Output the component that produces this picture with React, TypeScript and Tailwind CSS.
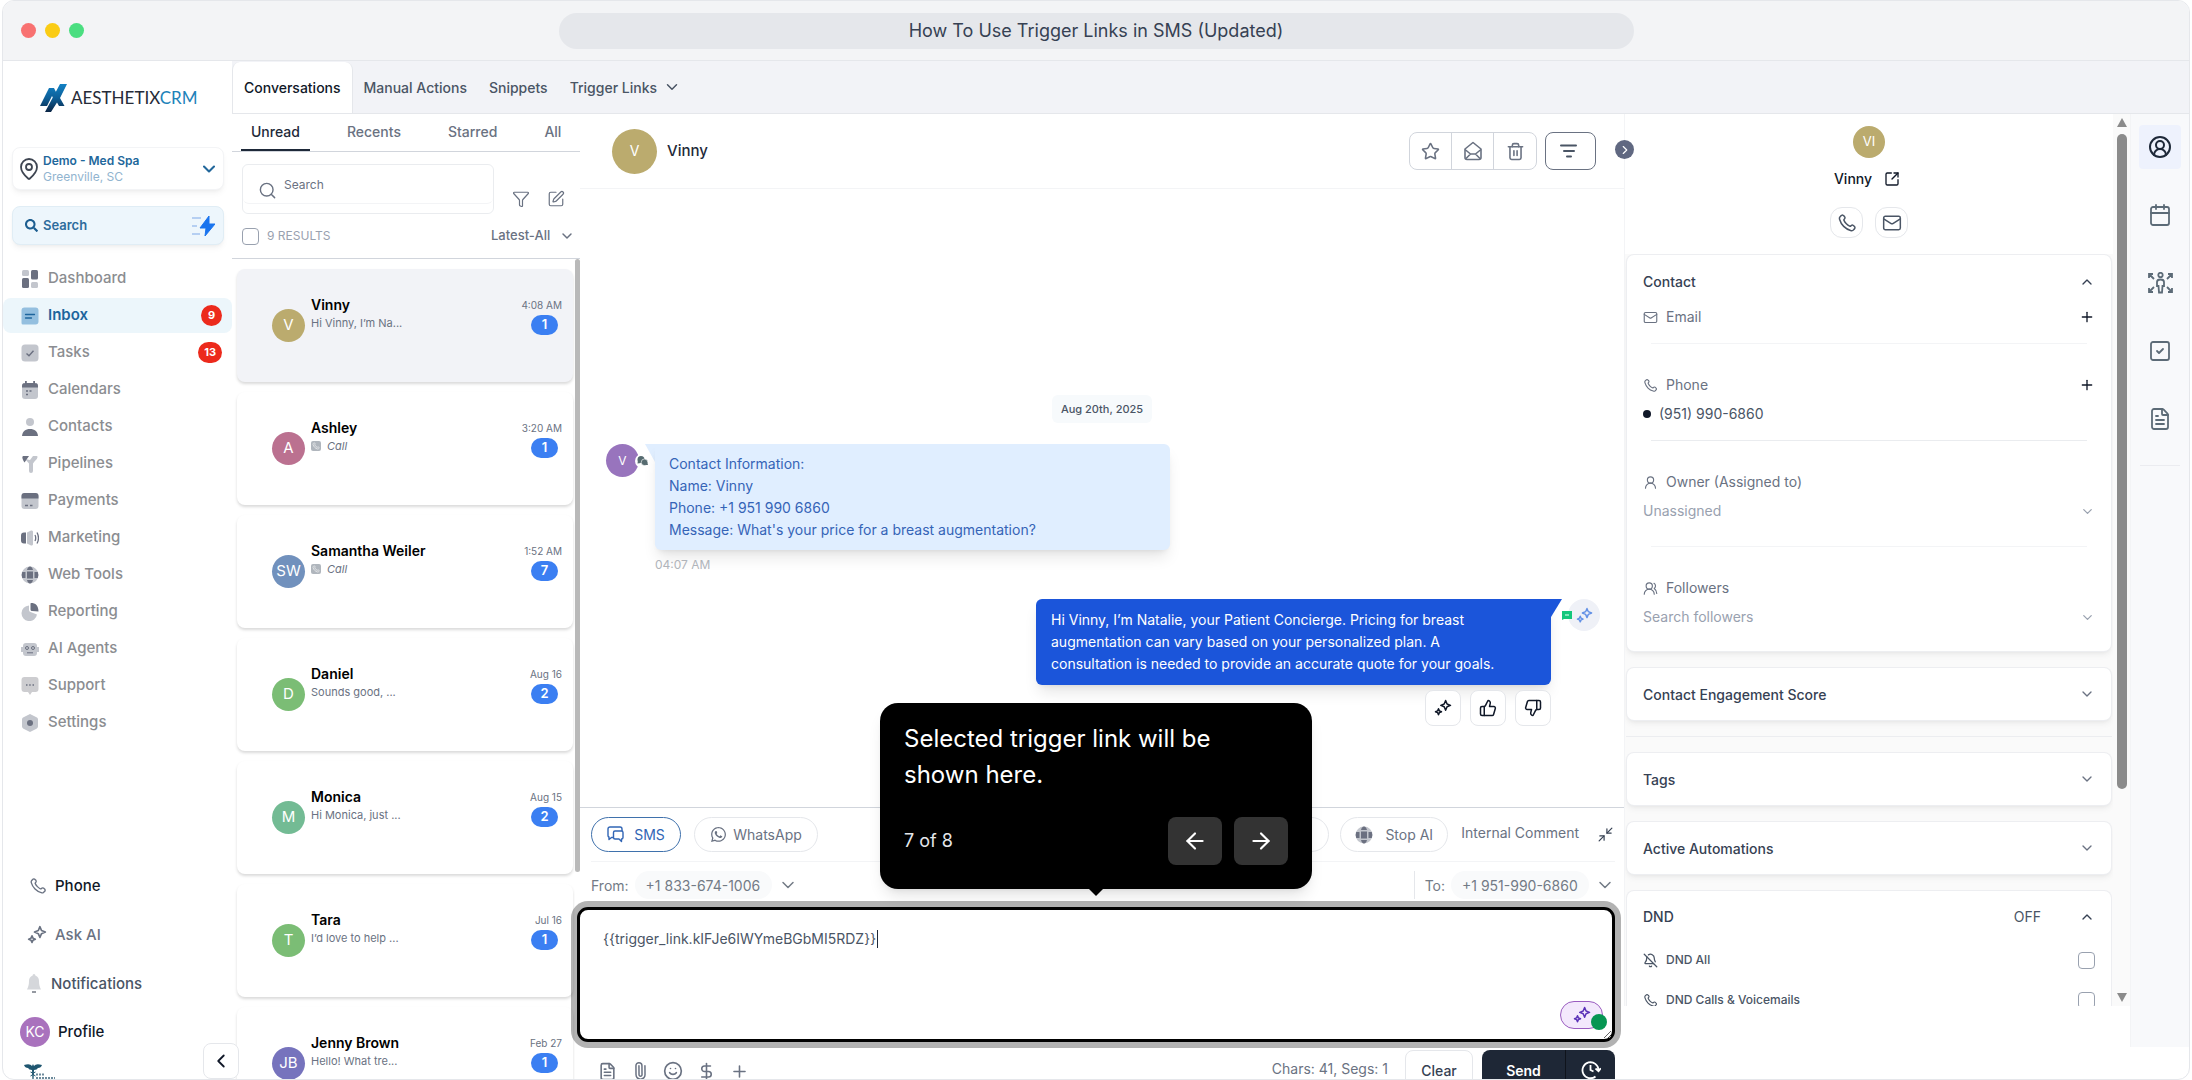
import type { ReactNode } from "react";
import {
  ArrowLeft,
  ArrowRight,
  BellOff,
  Calendar,
  ChevronDown,
  ChevronLeft,
  ChevronRight,
  ChevronUp,
  CircleUserRound,
  DollarSign,
  FileText,
  Filter,
  Mail,
  MapPin,
  Minimize2,
  Paperclip,
  Plus,
  Search,
  Smile,
  SquareArrowOutUpRight,
  SquareCheck,
  SquarePen,
  Star,
  ThumbsDown,
  ThumbsUp,
  Trash2,
  UserRound,
  UsersRound,
} from "lucide-react";
import { FaSearch, FaWhatsapp } from "react-icons/fa";

const DARK = "#6b7080";
const LIGHT = "#c3c6cd";

function PhoneIcon({ size = 18, className = "" }: { size?: number; className?: string }) {
  return (
    <svg width={size} height={size} viewBox="0 0 24 24" fill="none" stroke="currentColor" strokeWidth="1.8" className={className}>
      <path d="M8.38 8.85C9.08 10.3 10.03 11.66 11.23 12.86C12.43 14.06 13.79 15.01 15.24 15.71C15.36 15.77 15.42 15.8 15.5 15.82C15.78 15.9 16.13 15.85 16.36 15.68C16.43 15.63 16.49 15.57 16.6 15.46C16.95 15.11 17.13 14.93 17.3 14.82C17.97 14.39 18.82 14.39 19.48 14.82C19.66 14.93 19.83 15.11 20.18 15.46L20.38 15.65C20.91 16.18 21.18 16.45 21.32 16.73C21.61 17.3 21.61 17.97 21.32 18.54C21.18 18.82 20.91 19.09 20.38 19.62L20.22 19.78C19.69 20.31 19.43 20.57 19.07 20.78C18.67 21 18.05 21.16 17.59 21.16C17.18 21.16 16.89 21.08 16.33 20.92C13.3 20.06 10.43 18.43 8.04 16.05C5.66 13.66 4.03 10.79 3.17 7.76C3.01 7.2 2.93 6.91 2.93 6.5C2.93 6.04 3.09 5.42 3.31 5.02C3.52 4.66 3.78 4.4 4.31 3.87L4.47 3.71C5 3.18 5.27 2.91 5.55 2.77C6.12 2.48 6.79 2.48 7.36 2.77C7.64 2.91 7.91 3.18 8.44 3.71L8.63 3.91C8.98 4.26 9.16 4.43 9.27 4.61C9.7 5.27 9.7 6.12 9.27 6.79C9.16 6.96 8.98 7.14 8.63 7.49C8.52 7.6 8.46 7.66 8.41 7.73C8.24 7.96 8.19 8.31 8.27 8.59C8.29 8.67 8.32 8.73 8.38 8.85Z" />
    </svg>
  );
}

function Sparkles({ size = 18, className = "" }: { size?: number; className?: string }) {
  return (
    <svg width={size} height={size} viewBox="0 0 24 24" fill="none" stroke="currentColor" strokeWidth="2" strokeLinejoin="round" className={className}>
      <path d="M15.5 2l1.9 4.6L22 8.5l-4.6 1.9L15.5 15l-1.9-4.6L9 8.5l4.6-1.9z" />
      <path d="M6 13l1.2 2.8L10 17l-2.8 1.2L6 21l-1.2-2.8L2 17l2.8-1.2z" />
    </svg>
  );
}

function GlobeIcon() {
  return (
    <svg width="18" height="18" viewBox="0 0 18 18">
      <circle cx="9" cy="9" r="8.5" fill={LIGHT} />
      <path d="M6 5.5h6v7H6zM6 4c.6-2.3 1.5-3.5 3-3.5S11.4 1.7 12 4zM6 14c.6 2.3 1.5 3.5 3 3.5s2.4-1.2 3-3.5zM4.5 6v6H1.2a9 9 0 0 1 0-6zM13.5 6v6h3.3a9 9 0 0 0 0-6z" fill={DARK} />
    </svg>
  );
}

// Two overlapping speech bubbles
function SmsIcon() {
  return (
    <svg width="17" height="17" viewBox="0 0 17 17" fill="none" stroke="currentColor" strokeWidth="1.4" strokeLinejoin="round">
      <path d="M6 11.500H4.500L2 13.500V11A1.500 1.500 0 0 1 1 9.500V3a2 2 0 0 1 2-2h10a2 2 0 0 1 2 2v2" />
      <path d="M8 5h6.500A1.500 1.500 0 0 1 16 6.500v5a1.500 1.500 0 0 1-1.500 1.500v2.500L12 13H8a1.500 1.500 0 0 1-1.500-1.500v-5A1.500 1.500 0 0 1 8 5z" />
    </svg>
  );
}

// Open envelope, drawn with a folded front
function OpenMailIcon() {
  return (
    <svg width="20" height="20" viewBox="0 0 20 20" fill="none" stroke="currentColor" strokeWidth="1.6" strokeLinejoin="round">
      <path d="M2 8l8-6.500L18 8v8.500a2 2 0 0 1-2 2H4a2 2 0 0 1-2-2z" />
      <path d="M2 8.500l5.500 4.500h5L18 8.500M2.500 18l5-5M17.500 18l-5-5" />
    </svg>
  );
}

function FilterLines() {
  return (
    <svg width="18" height="16" viewBox="0 0 18 16" stroke="currentColor" strokeWidth="2" strokeLinecap="round">
      <path d="M1 2.500h15M4 8h10M7 13.500h4" />
    </svg>
  );
}

const navIcons: Record<string, ReactNode> = {
  Dashboard: (
    <>
      <rect x="1" y="0" width="7" height="6" rx="1.5" fill={LIGHT} />
      <rect x="10" y="0" width="7" height="9.5" rx="1.5" fill={DARK} />
      <rect x="1" y="8" width="7" height="10" rx="1.5" fill={DARK} />
      <rect x="10" y="12" width="7" height="6" rx="1.5" fill={LIGHT} />
    </>
  ),
  Inbox: (
    <>
      <path d="M3.5 0.5h11a3 3 0 0 1 3 3v11a3 3 0 0 1-3 3H2A1.5 1.5 0 0 1 .5 16V3.5a3 3 0 0 1 3-3z" fill="#94bfdf" />
      <path d="M4.5 7.5h9M4.5 11h6" stroke="#1d659d" strokeWidth="1.3" strokeLinecap="round" />
    </>
  ),
  Tasks: (
    <>
      <rect x="0.5" y="0.5" width="17" height="17" rx="3.5" fill={LIGHT} />
      <path d="M5.5 9.5l2.5 2.3 4.5-5" stroke={DARK} strokeWidth="1.4" fill="none" />
    </>
  ),
  Calendars: (
    <>
      <rect x="1" y="2" width="16" height="16" rx="3" fill={LIGHT} />
      <path d="M1 6.5V5a3 3 0 0 1 3-3h10a3 3 0 0 1 3 3v1.5zM4 0h1.8v4H4zM12.2 0H14v4h-1.8z" fill={DARK} />
      <path d="M5 10h2M8.5 10h2M5 13.5h2" stroke={DARK} strokeWidth="1.5" />
    </>
  ),
  Contacts: (
    <>
      <circle cx="9" cy="4" r="4" fill={LIGHT} />
      <path d="M1 18c.3-4.5 3.5-7 8-7s7.7 2.5 8 7z" fill={DARK} />
    </>
  ),
  Pipelines: (
    <>
      <path d="M9 5l3-4h3.5a1 1 0 0 1 1 1.2c-.5 2.5-3 3.6-4.5 6.300V16a2 2 0 0 1-4 0V8.500L4 4z" fill={LIGHT} />
      <path d="M2 1h6L3.5 7.5C2 5.5 1.5 4 1.3 2z" fill={DARK} />
    </>
  ),
  Payments: (
    <>
      <rect x="0.5" y="1" width="17" height="16" rx="3" fill={LIGHT} />
      <path d="M.5 6.5V4a3 3 0 0 1 3-3h11a3 3 0 0 1 3 3v2.5z" fill={DARK} />
      <path d="M4 13.5h3M9 13.5h2.5" stroke={DARK} strokeWidth="1.4" />
    </>
  ),
  Marketing: (
    <>
      <path d="M5 3.5v11H3A3 3 0 0 1 0 11.5v-5a3 3 0 0 1 3-3z" fill={DARK} />
      <path d="M6 3.5L10 1.5a1.5 1.5 0 0 1 2 1.5v12a1.5 1.5 0 0 1-2 1.5l-4-2z" fill={LIGHT} />
      <path d="M14 6q1.5 3 0 6M16 3.5q3 5.5 0 11" stroke={DARK} strokeWidth="1.3" fill="none" />
    </>
  ),
  Reporting: (
    <>
      <path d="M8 2.5a7.8 7.8 0 1 0 8 9l-6.5-2.5A2 2 0 0 1 8 7z" fill={LIGHT} />
      <path d="M10 0c4.5 0 7.5 2.5 7.5 8.5L11 8a1.5 1.5 0 0 1-1.5-1.5V.5z" fill={DARK} />
    </>
  ),
  "AI Agents": (
    <>
      <rect x="2" y="3" width="14" height="13" rx="3" fill={LIGHT} />
      <path d="M0 7h2v5H0zM16 7h2v5h-2z" fill={LIGHT} />
      <circle cx="6" cy="8" r="1.5" fill="none" stroke={DARK} />
      <circle cx="12" cy="8" r="1.5" fill="none" stroke={DARK} />
      <path d="M6 12.8h6" stroke={DARK} />
    </>
  ),
  Support: (
    <>
      <path d="M3.5 0h11a3 3 0 0 1 3 3v9a3 3 0 0 1-3 3H11l-2 3-2-3H3.5a3 3 0 0 1-3-3V3a3 3 0 0 1 3-3z" fill="#cdcdd0" />
      <path d="M5 8h1.5M8.2 8h1.5M11.5 8H13" stroke={DARK} strokeWidth="1.3" />
    </>
  ),
  Settings: (
    <>
      <path d="M9 0l6.5 3.3a2.5 2.5 0 0 1 1.5 2.2v7a2.5 2.5 0 0 1-1.5 2.2L9 18l-6.5-3.3A2.5 2.5 0 0 1 1 12.5v-7a2.5 2.5 0 0 1 1.5-2.2z" fill={LIGHT} />
      <circle cx="9" cy="9" r="3" fill={DARK} />
    </>
  ),
};

const navItems: { label: string; badge?: string }[] = [
  { label: "Dashboard" },
  { label: "Inbox", badge: "9" },
  { label: "Tasks", badge: "13" },
  { label: "Calendars" },
  { label: "Contacts" },
  { label: "Pipelines" },
  { label: "Payments" },
  { label: "Marketing" },
  { label: "Web Tools" },
  { label: "Reporting" },
  { label: "AI Agents" },
  { label: "Support" },
  { label: "Settings" },
];

const conversations = [
  { name: "Vinny", initials: "V", color: "bg-[#bbab6e]", preview: "Hi Vinny, I’m Na...", time: "4:08 AM", count: 1 },
  { name: "Ashley", initials: "A", color: "bg-[#bb7190]", call: true, time: "3:20 AM", count: 1 },
  { name: "Samantha Weiler", initials: "SW", color: "bg-[#7191bd]", call: true, time: "1:52 AM", count: 7 },
  { name: "Daniel", initials: "D", color: "bg-[#7bbd75]", preview: "Sounds good, ...", time: "Aug 16", count: 2 },
  { name: "Monica", initials: "M", color: "bg-[#73bb94]", preview: "Hi Monica, just ...", time: "Aug 15", count: 2 },
  { name: "Tara", initials: "T", color: "bg-[#7bbd75]", preview: "I’d love to help ...", time: "Jul 16", count: 1 },
  { name: "Jenny Brown", initials: "JB", color: "bg-[#7673bd]", preview: "Hello! What tre...", time: "Feb 27", count: 1 },
];

function Sidebar() {
  return (
    <aside className="flex w-[229px] shrink-0 flex-col">
      {/* Logo */}
      <div className="flex h-[74px] items-center gap-1 pl-[37px]">
        <svg width="27" height="28" viewBox="0 0 27 28">
          <defs>
            <linearGradient id="brand" gradientUnits="userSpaceOnUse" x1="0" y1="0" x2="0" y2="28">
              <stop offset="0" stopColor="#1281c4" />
              <stop offset="0.5" stopColor="#0d5f98" />
              <stop offset="1" stopColor="#0b2545" />
            </linearGradient>
          </defs>
          <path d="M9 4h5l4.5 9-3 5.500-3.500-6.500L7 22H0z" fill="url(#brand)" />
          <path d="M20 0h7l-7 14 4.500 8H19l-2-3.500L11 28H5z" fill="url(#brand)" />
        </svg>
        <span className="font-[Lato,sans-serif] text-[17px] text-[#262b38]">
          AESTHETIX<span className="text-[#2182b9]">CRM</span>
        </span>
      </div>

      {/* Location */}
      <div className="mt-3 flex flex-col gap-4 pr-2 pl-[9px]">
        <button className="flex h-[43px] items-center rounded-lg border border-gray-100 bg-white pr-1 pl-1 text-left shadow-md shadow-black/5">
          <MapPin size={24} strokeWidth={1.8} className="text-[#3f4652]" />
          <span className="ml-0.5 flex flex-1 flex-col text-xs leading-4">
            <span className="font-semibold text-[#22679b]">Demo - Med Spa</span>
            <span className="text-[#91b4cf]">Greenville, SC</span>
          </span>
          <ChevronDown size={20} strokeWidth={2.5} className="text-[#22679b]" />
        </button>
        <button className="flex h-[39px] items-center rounded-lg border border-[#e0edf5] bg-[#edf6fc] pr-2 pl-3 shadow-md shadow-black/5">
          <FaSearch size={13} className="text-[#1d5e90]" />
          <span className="ml-[5px] flex-1 text-left text-[13px] font-semibold text-[#2d6c9c]">Search</span>
          <svg width="23" height="22" viewBox="0 0 23 22">
            <path d="M0 3h9M0 11h5M0 19h8" stroke="#a3c2ee" strokeWidth="1.5" />
            <path d="M17 1L8 13h6l-1 8 10-12h-6z" fill="#1a74ee" stroke="#1a74ee" strokeLinejoin="round" />
          </svg>
        </button>
      </div>

      {/* Navigation */}
      <nav className="mt-4 flex flex-col gap-0.5">
        {navItems.map((item) => (
          <a
            key={item.label}
            href="#"
            className={
              item.label === "Inbox"
                ? "flex h-[35px] items-center gap-[9px] rounded-lg bg-[#ecf6fb] pr-2.5 pl-[18px] text-[15px] font-semibold text-[#1d659d]"
                : "flex h-[35px] items-center gap-[9px] pr-2.5 pl-[18px] text-[15px] font-medium text-[#8b8d91]"
            }
          >
            {item.label === "Web Tools" ? <GlobeIcon /> : (
              <svg width="18" height="18" viewBox="0 0 18 18" fill="none">{navIcons[item.label]}</svg>
            )}
            <span className="flex-1">{item.label}</span>
            {item.badge && (
              <span className="flex h-[21px] min-w-[21px] items-center justify-center rounded-full bg-[#ec2a1c] px-[6px] text-[11px] font-bold text-white">
                {item.badge}
              </span>
            )}
          </a>
        ))}
      </nav>

      {/* Footer links */}
      <div className="mt-auto flex flex-col text-[15px] font-medium text-gray-900">
        <a href="#" className="flex h-12 items-center gap-2 pl-[26px]">
          <PhoneIcon className="text-gray-500" /> Phone
        </a>
        <a href="#" className="flex h-[50px] items-center gap-2 pl-6 text-gray-500">
          <Sparkles size={20} /> Ask AI
        </a>
        <a href="#" className="flex h-12 items-center gap-2.5 pl-6 text-gray-600">
          <svg width="14" height="20" viewBox="0 0 14 20">
            <path d="M7 0c1 0 1.3.8 1.3 1.500C11 2.500 12 4.500 12 7c0 4 .8 6 2 8.500H0C1.2 13 2 11 2 7c0-2.500 1-4.500 3.700-5.500C5.700.8 6 0 7 0z" fill="#d5d7db" />
            <path d="M5 18h4" stroke="#9599a1" strokeWidth="2" />
          </svg>
          Notifications
        </a>
        <a href="#" className="flex h-12 items-center gap-2 pl-[17px]">
          <span className="flex size-[30px] items-center justify-center rounded-full bg-[#a972bd] text-sm font-normal text-white">KC</span>
          Profile
        </a>
        <div className="relative h-[23px] pt-2 pl-[21px]">
          <svg width="32" height="15" viewBox="0 0 32 15">
            <path d="M0 1q6-2 8 1l1-2 1 2q2-3 8-1-1 3-4 3-1 2-4 2l-.4 9H8.400L8 6Q5 6 4 4 1 4 0 1z" fill="#1f5670" />
            <path d="M6.500 8q5 1.500 0 4M11.500 8q-5 1.500 0 4" stroke="#1f5670" fill="none" />
            <path d="M12 10.500h9M12 14h19" stroke="#6c8a9b" strokeWidth="2" strokeDasharray="2 1" />
          </svg>
          <button aria-label="Collapse sidebar" className="absolute right-[-7px] bottom-0 z-10 flex size-9 items-center justify-center rounded-lg border border-gray-200 bg-white">
            <ChevronLeft size={22} />
          </button>
        </div>
      </div>
    </aside>
  );
}

function ConversationList() {
  return (
    <section className="flex min-h-0 w-[348px] shrink-0 flex-col">
      <div className="flex h-[38px] shrink-0 gap-[27px] border-b border-gray-300 pl-[9px] text-[14px] font-medium text-gray-500">
        <button className="border-b-2 border-gray-800 px-2.5 text-gray-800">Unread</button>
        <button className="px-2.5 pb-0.5">Recents</button>
        <button className="px-2.5 pb-0.5">Starred</button>
        <button className="px-2.5 pb-0.5">All</button>
      </div>
      <div className="flex h-[106px] shrink-0 flex-col pt-3 pr-[5px] pl-[10px]">
        <div className="flex items-start">
          <div className="h-[50px] w-[252px] rounded-md border border-gray-200/80">
            <label className="flex h-[39px] items-center rounded-md border-b border-gray-100 pl-[15px]">
              <Search size={19} strokeWidth={1.8} className="mt-3 text-gray-500" />
              <input aria-label="Search conversations" placeholder="Search" className="ml-[7px] h-6 w-48 text-xs outline-none placeholder:text-gray-500" />
            </label>
          </div>
          <button aria-label="Filter" className="mt-[26px] ml-[18px] text-gray-500"><Filter size={18} strokeWidth={1.6} /></button>
          <button aria-label="Compose" className="mt-[26px] ml-[17px] text-gray-500"><SquarePen size={18} strokeWidth={1.6} /></button>
        </div>
        <div className="mt-2 flex h-7 items-center text-gray-500">
          <label className="flex flex-1 items-center gap-2 text-xs text-gray-400">
            <input type="checkbox" className="size-[17px] appearance-none rounded border border-gray-400" />
            9 RESULTS
          </label>
          <select aria-label="Sort order" className="appearance-none text-[13px] font-medium">
            <option>Latest-All</option>
          </select>
          <ChevronDown size={16} strokeWidth={2.2} className="ml-2" />
        </div>
      </div>
      <div className="flex min-h-0 flex-1 border-t border-gray-300">
        <div className="flex min-w-0 flex-1 flex-col gap-2.5 overflow-hidden pt-2.5 pl-[5px]">
          {conversations.map((c, i) => (
            <article
              key={c.name}
              className={`mr-0.5 flex h-[113px] shrink-0 rounded-lg pt-[27px] pr-[11px] pl-[35px] shadow-[0_2px_3px_rgba(0,0,0,0.15)] ${i === 0 ? "bg-[#f2f3f7]" : "bg-white"}`}
            >
              <span className={`mt-[13px] flex size-[33px] items-center justify-center rounded-full text-[15px] text-white ${c.color}`}>{c.initials}</span>
              <div className="ml-1.5 flex-1">
                <h3 className="text-[14px] leading-[18px] font-semibold text-black">{c.name}</h3>
                {c.call ? (
                  <p className="flex items-center gap-1.5 text-[11px] leading-[18px] text-gray-500 italic">
                    <span className="flex size-2.5 items-center justify-center rounded-[2px] bg-[#b0b6bd] text-white"><PhoneIcon size={8} /></span>
                    Call
                  </p>
                ) : (
                  <p className="text-[11px] leading-[18px] text-gray-500">{c.preview}</p>
                )}
              </div>
              <div className="flex flex-col items-end gap-px">
                <time className="text-[10px] leading-[18px] text-gray-500">{c.time}</time>
                <span className="mr-1 flex h-5 w-[27px] items-center justify-center rounded-full bg-[#3b7ff2] text-[13px] font-semibold text-white">{c.count}</span>
              </div>
            </article>
          ))}
        </div>
        <div className="w-[5px] pb-[207px]"><div className="h-full rounded-full bg-[#b9b9b9]" /></div>
      </div>
    </section>
  );
}

function Tooltip() {
  return (
    <div className="absolute bottom-full left-1/2 mb-[21px] w-[432px] -translate-x-1/2 rounded-[18px] bg-black px-6 pt-[18px] pb-6 text-white shadow-lg">
      <p className="text-[24px] leading-9">Selected trigger link will be shown here.</p>
      <div className="mt-6 flex items-center gap-3">
        <span className="flex-1 text-lg leading-7 text-gray-200">7 of 8</span>
        <button aria-label="Previous step" className="flex h-12 w-[54px] items-center justify-center rounded-lg bg-[#333]"><ArrowLeft size={26} /></button>
        <button aria-label="Next step" className="flex h-12 w-[54px] items-center justify-center rounded-lg bg-[#333]"><ArrowRight size={26} /></button>
      </div>
      <div className="absolute top-full left-1/2 -translate-x-1/2 border-x-[7px] border-t-[7px] border-x-transparent border-t-black" />
    </div>
  );
}

function Composer() {
  return (
    <div className="relative z-10 h-[272px] shrink-0 border-t border-gray-300 pt-[9px] pr-[9px] pl-[11px]">
      <div className="flex items-center border-b border-gray-100 pb-[9px] text-[14px] text-gray-500">
        <button className="flex h-[35px] w-[90px] items-center justify-center gap-2.5 rounded-full border border-[#3f71ac] text-[#3165b5]">
          <SmsIcon /> SMS
        </button>
        <button className="ml-[13px] flex h-[35px] w-[124px] items-center justify-center gap-1.5 rounded-full border border-gray-200">
          <FaWhatsapp size={17} /> WhatsApp
        </button>
        <button aria-label="More channels" className="ml-auto h-[35px] w-[90px] rounded-full border border-gray-200" />
        <button className="ml-[11px] flex h-[35px] w-[108px] items-center justify-center gap-3 rounded-full border border-gray-200">
          <GlobeIcon /> Stop AI
        </button>
        <button className="ml-[13px] pb-1">Internal Comment</button>
        <button aria-label="Minimize" className="mr-px ml-[18px] text-gray-700"><Minimize2 size={17} strokeWidth={1.7} /></button>
      </div>
      <div className="mt-[9px] flex h-7 items-center text-[14px] text-[#737b86]">
        <label htmlFor="from">From:</label>
        <select id="from" className="ml-1.5 h-7 appearance-none rounded-full bg-gray-50 px-[11px]"><option>+1 833-674-1006</option></select>
        <ChevronDown size={20} strokeWidth={1.8} className="ml-1.5" />
        <label htmlFor="to" className="ml-auto flex h-7 items-center border-l border-gray-200 pl-2.5">To:</label>
        <select id="to" className="ml-1.5 h-7 appearance-none rounded-full bg-gray-50 px-[11px]"><option>+1 951-990-6860</option></select>
        <ChevronDown size={20} strokeWidth={1.8} className="ml-1.5" />
      </div>
      <div className="relative mt-2 -ml-3.5 h-[135px] rounded-[11px] border-[3px] border-black bg-white ring-[6px] ring-black/30">
        <textarea
          aria-label="Message"
          defaultValue="{{trigger_link.kIFJe6IWYmeBGbMI5RDZ}}"
          className="h-full w-full resize rounded-lg px-[23px] pt-[19px] text-[14px] leading-5 text-gray-600 outline-none"
        />
        {/* Text cursor */}
        <span className="absolute top-5 left-[297px] h-[18px] w-px bg-gray-800" />
        <button aria-label="Write with AI" className="absolute right-[9px] bottom-[10px] flex h-7 w-[43px] items-center justify-center rounded-full border border-[#9a5cc0] bg-[#f3e8fc] text-[#5b32b8]">
          <Sparkles size={18} />
        </button>
        <span className="absolute right-[5px] bottom-[9px] size-4 rounded-full bg-[#079653]" />
        <Tooltip />
      </div>
      <div className="mt-2 flex items-start text-gray-500">
        <div className="flex items-center gap-3.5 pt-[11px] pl-[7px]">
          <button aria-label="Templates"><FileText size={19} /></button>
          <button aria-label="Attach"><Paperclip size={18} className="-rotate-45" /></button>
          <button aria-label="Emoji"><Smile size={20} /></button>
          <button aria-label="Request payment"><DollarSign size={19} /></button>
          <button aria-label="More"><Plus size={19} /></button>
        </div>
        <span className="ml-auto pt-2 text-[14px] leading-[22px]">Chars: 41, Segs: 1</span>
        <button className="ml-[17px] h-10 w-[68px] rounded-lg border border-gray-200 bg-white text-[14px] font-medium text-gray-700">Clear</button>
        <div className="ml-[9px] flex h-10 overflow-hidden rounded-lg bg-[#1e2736] text-white">
          <button className="w-[84px] border-r border-black/50 text-[14px] font-semibold">Send</button>
          <button aria-label="Schedule" className="flex w-[49px] items-center justify-center">
            <svg width="20" height="20" viewBox="0 0 20 20" fill="none" stroke="currentColor" strokeWidth="1.8">
              <path d="M14.5 16.5A8 8 0 1 1 17.5 10M14.5 8.5l3 2.700 2.300-3M9.500 5v5l3 1.500" />
            </svg>
          </button>
        </div>
      </div>
    </div>
  );
}

function Thread() {
  return (
    <main className="flex min-w-0 flex-1 flex-col">
      <header className="flex h-[75px] shrink-0 items-center border-b border-gray-100 pr-7 pl-8">
        <span className="flex size-[45px] items-center justify-center rounded-full bg-[#bbab6e] text-sm text-white">V</span>
        <h1 className="ml-2.5 flex-1 text-[15px] font-medium text-gray-800">Vinny</h1>
        <div className="flex h-[38px] divide-x divide-gray-300 rounded-lg border border-gray-300 text-gray-500">
          <button aria-label="Star" className="flex w-[42px] items-center justify-center"><Star size={19} /></button>
          <button aria-label="Mark as read" className="flex w-[42px] items-center justify-center"><OpenMailIcon /></button>
          <button aria-label="Delete" className="flex w-[42px] items-center justify-center"><Trash2 size={19} /></button>
        </div>
        <button aria-label="Filter messages" className="ml-2 flex h-[38px] w-[51px] items-center justify-center rounded-lg border border-gray-500 pr-1 text-gray-600"><FilterLines /></button>
      </header>

      <div className="flex min-h-0 flex-1 flex-col justify-end pb-[81px] text-[14px] leading-[22px]">
        <div className="self-center rounded-md bg-[#f7fafc] px-[9px] py-[5px] text-[11px] leading-[18px] font-medium text-gray-600">Aug 20th, 2025</div>
        <div className="mt-[21px] flex items-start pl-[26px]">
          <div className="relative">
            <span className="flex size-[33px] items-center justify-center rounded-full bg-[#9874bd] text-xs text-white">V</span>
            <span className="absolute top-2.5 -right-2.5 flex size-3.5 items-center justify-center rounded-full bg-white">
              <svg width="11" height="10" viewBox="0 0 11 10" fill="#566b70"><circle cx="4" cy="3.500" r="3.500" /><path d="M.5 7.500L1 4l3 3z" /><circle cx="7.500" cy="6.300" r="3.300" stroke="#fff" strokeWidth=".6" /><path d="M8 9h3l-1-3z" /></svg>
            </span>
          </div>
          <div className="ml-1.5 flex items-start">
            <svg width="10" height="18" viewBox="0 0 10 18"><path d="M0 0h10v18z" fill="#e0eeff" /></svg>
            <div className="w-[515px] rounded-r-md rounded-bl-md bg-[#e0eeff] px-3.5 py-[9px] text-[#3564b7] shadow-lg shadow-black/10">
              Contact Information:<br />
              Name: Vinny<br />
              Phone: +1 951 990 6860<br />
              Message: What's your price for a breast augmentation?
            </div>
          </div>
        </div>
        <time className="mt-1 ml-[75px] text-xs leading-[22px] text-[#b0b4ba]">04:07 AM</time>

        <div className="mt-[23px] flex items-start justify-end pr-6">
          <div className="w-[515px] rounded-l-md rounded-br-md bg-[#1b55da] py-[10px] pr-12 pl-[15px] text-white shadow-lg shadow-black/10">
            Hi Vinny, I’m Natalie, your Patient Concierge. Pricing for breast augmentation can vary based on your personalized plan. A consultation is needed to provide an accurate quote for your goals.
          </div>
          <svg width="11" height="18" viewBox="0 0 11 18" className="shrink-0"><path d="M0 0h11L0 18z" fill="#1b55da" /></svg>
          <svg width="10" height="9" viewBox="0 0 10 9" className="relative z-10 mt-3 shrink-0"><path d="M0 0h10v8H2L0 9z" fill="#14c77c" /><path d="M3 4h4" stroke="#a4efce" strokeWidth="1.5" /></svg>
          <span className="-ml-1 flex size-8 shrink-0 items-center justify-center rounded-full bg-[#eff1f7] text-[#6391e6]"><Sparkles size={17} /></span>
        </div>
        <div className="mt-[5px] flex justify-end gap-[9px] pr-[73px] text-gray-900">
          <button aria-label="Improve" className="flex size-9 items-center justify-center rounded-lg border border-gray-200 bg-white"><Sparkles size={18} /></button>
          <button aria-label="Like" className="flex size-9 items-center justify-center rounded-lg border border-gray-200 bg-white"><ThumbsUp size={18} /></button>
          <button aria-label="Dislike" className="flex size-9 items-center justify-center rounded-lg border border-gray-200 bg-white"><ThumbsDown size={18} /></button>
        </div>
      </div>
      <Composer />
    </main>
  );
}

function CollapsedCard({ title }: { title: string }) {
  return (
    <button className="flex h-[54px] items-center justify-between rounded-lg border border-gray-200/70 bg-white px-4 text-left text-[14px] font-medium text-gray-700 shadow-md shadow-black/5">
      {title}
      <ChevronDown size={16} className="text-gray-500" />
    </button>
  );
}

function DetailsPanel() {
  return (
    <section className="relative mb-[73px] flex min-h-0 w-[506px] shrink-0 border-l border-gray-100">
      <button aria-label="Toggle details" className="absolute top-[26px] -left-2.5 z-10 flex size-[19px] items-center justify-center rounded-full bg-[#606881] text-white">
        <ChevronRight size={14} />
      </button>
      <div className="flex min-w-0 flex-1 flex-col overflow-hidden bg-[#fafafa]">
        <div className="flex h-[140px] shrink-0 flex-col items-center bg-white pt-3">
          <span className="flex size-8 items-center justify-center rounded-full bg-[#bbab6e] text-[13px] text-white">VI</span>
          <div className="mt-[9px] flex items-center gap-3 pr-1 text-[14px] leading-6 font-medium text-gray-900">
            Vinny <SquareArrowOutUpRight size={16} />
          </div>
          <div className="mt-4 flex gap-3 text-gray-600">
            <button aria-label="Call" className="flex h-[31px] w-[33px] items-center justify-center rounded-xl border border-gray-200"><PhoneIcon size={20} /></button>
            <button aria-label="Email" className="flex h-[31px] w-[33px] items-center justify-center rounded-xl border border-gray-200"><Mail size={20} strokeWidth={1.8} /></button>
          </div>
        </div>

        <div className="flex flex-col px-px text-[14px] text-gray-500">
          <div className="rounded-lg border border-gray-200/70 bg-white px-4 pt-4 pb-[23px] leading-[22px] shadow-md shadow-black/5">
            <div className="flex items-center justify-between font-medium text-gray-700">Contact <ChevronUp size={16} /></div>
            <div className="mt-[13px] flex h-[22px] items-center gap-2">
              <Mail size={15} strokeWidth={1.8} /> <span className="flex-1">Email</span>
              <button aria-label="Add email" className="text-gray-900"><Plus size={16} /></button>
            </div>
            <hr className="mx-2 mt-[15px] border-gray-100" />
            <div className="mt-[30px] flex h-[22px] items-center gap-2">
              <PhoneIcon size={15} /> <span className="flex-1">Phone</span>
              <button aria-label="Add phone" className="text-gray-900"><Plus size={16} /></button>
            </div>
            <div className="mt-[7px] flex h-[22px] items-center gap-2 text-gray-600">
              <span className="size-2 rounded-full bg-gray-900" /> (951) 990-6860
            </div>
            <hr className="mx-2 mt-[15px] border-gray-200/80" />
            <label htmlFor="owner" className="mt-[30px] flex h-[22px] items-center gap-2"><UserRound size={15} strokeWidth={1.8} /> Owner (Assigned to)</label>
            <div className="mt-[7px] flex h-[22px] items-center text-gray-400">
              <select id="owner" className="flex-1 appearance-none"><option>Unassigned</option></select>
              <ChevronDown size={15} />
            </div>
            <hr className="mx-2 mt-6 border-gray-100" />
            <label htmlFor="followers" className="mt-[30px] flex h-[22px] items-center gap-2"><UsersRound size={15} strokeWidth={1.8} /> Followers</label>
            <div className="mt-[7px] flex h-[22px] items-center text-gray-400">
              <select id="followers" className="flex-1 appearance-none"><option>Search followers</option></select>
              <ChevronDown size={15} />
            </div>
          </div>
          <div className="flex flex-col gap-[15px] pt-[15px]">
            <CollapsedCard title="Contact Engagement Score" />
            <hr className="border-gray-200/70" />
            <CollapsedCard title="Tags" />
            <CollapsedCard title="Active Automations" />
            <div className="rounded-lg border border-gray-200/70 bg-white px-4 pt-[15px] pb-5 leading-[22px]">
              <div className="flex items-center font-medium text-gray-700">
                <span className="flex-1">DND</span>
                <span className="font-normal text-gray-600">OFF</span>
                <ChevronUp size={16} className="ml-[38px]" />
              </div>
              <label className="mt-[21px] flex h-[22px] items-center gap-2 text-xs leading-3 font-medium text-gray-600">
                <BellOff size={15} /> <span className="flex-1">DND All</span>
                <input type="checkbox" className="size-[17px] appearance-none rounded border border-gray-400" />
              </label>
              <label className="mt-[18px] flex h-[22px] items-center gap-2 text-xs leading-3 font-medium text-gray-600">
                <PhoneIcon size={15} /> <span className="flex-1">DND Calls & Voicemails</span>
                <input type="checkbox" className="size-[17px] appearance-none rounded border border-gray-400" />
              </label>
            </div>
          </div>
        </div>
      </div>
      {/* Scrollbar */}
      <div className="flex w-[17px] flex-col items-center bg-[#fafafa] pt-1 pb-1">
        <span className="border-x-[5px] border-b-[9px] border-x-transparent border-b-[#8b8b8b]" />
        <span className="mt-[7px] w-2.5 flex-1 rounded-full bg-[#8b8b8b]" />
        <span className="mt-[204px] border-x-[5px] border-t-[9px] border-x-transparent border-t-[#8b8b8b]" />
      </div>
    </section>
  );
}

function RightRail() {
  return (
    <nav aria-label="Contact tools" className="mb-8 flex w-[59px] shrink-0 flex-col items-center border-l border-gray-100 bg-[#f8f9fb] pt-[11px] text-[#5c6b77]">
      <a href="#" aria-label="Contact" className="flex h-11 w-[42px] items-center justify-center rounded bg-[#eef2fd] text-gray-800"><CircleUserRound size={24} /></a>
      <a href="#" aria-label="Appointments" className="mt-6 flex h-11 items-center"><Calendar size={24} strokeWidth={1.8} /></a>
      <a href="#" aria-label="Opportunities" className="mt-6 flex h-11 items-center">
        <svg width="25" height="22" viewBox="0 0 25 22" fill="none" stroke="currentColor" strokeWidth="1.8">
          <circle cx="12.5" cy="3" r="2.2" />
          <path d="M9 10q0-2.5 3.5-2.5T16 10v4h-1.5l-.5 6.500h-3l-.5-6.500H9zM1 6V2h4M1 2l5 5M24 6V2h-4M24 2l-5 5M1 16v4h4M1 20l5-5M24 16v4h-4M24 20l-5-5" />
        </svg>
      </a>
      <a href="#" aria-label="Tasks" className="mt-6 flex h-11 items-center"><SquareCheck size={24} strokeWidth={1.8} /></a>
      <a href="#" aria-label="Documents" className="mt-6 flex h-11 items-center"><FileText size={24} strokeWidth={1.8} /></a>
      <hr className="mt-6 w-10 border-gray-200/70" />
    </nav>
  );
}

export default function App() {
  return (
    <div className="h-screen bg-white px-[2px] font-[Inter,sans-serif]">
      <div className="flex h-full flex-col overflow-hidden rounded-xl border border-gray-200 bg-white">
        {/* Title bar */}
        <div className="flex h-[60px] shrink-0 items-center border-b border-gray-200 bg-gray-100 px-[18px]">
          <div className="flex flex-1 gap-[9px]">
            <span className="size-[15px] rounded-full bg-[#f87171]" />
            <span className="size-[15px] rounded-full bg-[#facc15]" />
            <span className="size-[15px] rounded-full bg-[#4ade80]" />
          </div>
          <div className="flex h-9 w-1/2 items-center justify-center rounded-full bg-gray-200 text-lg text-gray-700">
            How To Use Trigger Links in SMS (Updated)
          </div>
          <div className="flex-1" />
        </div>

        <div className="flex min-h-0 flex-1">
          <Sidebar />
          <div className="flex min-w-0 flex-1 flex-col">
            <nav className="flex h-[53px] shrink-0 items-stretch border-b border-gray-200 bg-[#f2f3f7] text-[14px] font-medium text-gray-600">
              <a href="#" className="mt-px flex items-center rounded-t-lg border-x border-gray-200 bg-white px-[11px] text-gray-900">Conversations</a>
              <a href="#" className="ml-[11px] flex items-center">Manual Actions</a>
              <a href="#" className="ml-[22px] flex items-center">Snippets</a>
              <button className="ml-[22px] flex items-center gap-1.5">Trigger Links <ChevronDown size={18} /></button>
            </nav>
            <div className="flex min-h-0 flex-1">
              <ConversationList />
              <Thread />
              <DetailsPanel />
              <RightRail />
            </div>
          </div>
        </div>
      </div>
    </div>
  );
}
